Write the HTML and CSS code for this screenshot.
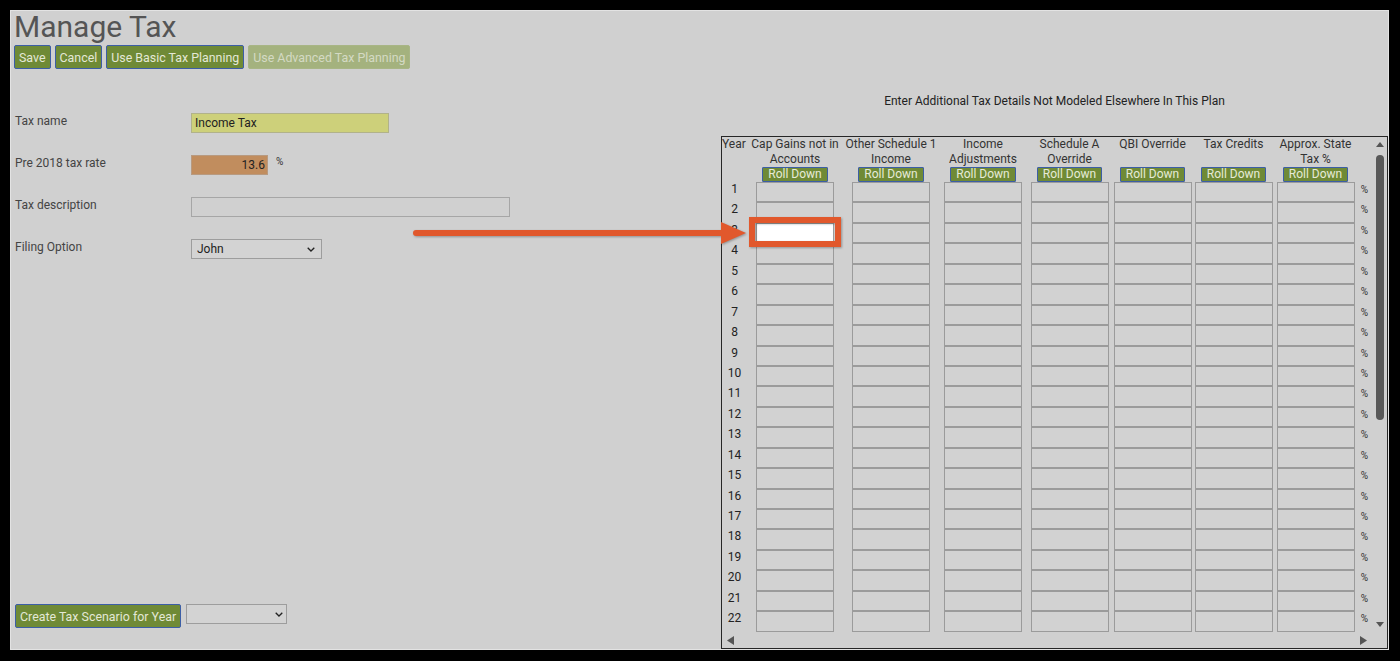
FILE: index.html
```html
<!DOCTYPE html>
<html lang="en">
<head>
    <meta charset="UTF-8">
    <meta name="viewport" content="width=device-width, initial-scale=1">
    <title>Manage Tax</title>
    <link rel="stylesheet" href="styles.css">
</head>
<body>
    <div class="page">
        <h1>Manage Tax</h1>
        <div class="toolbar">
            <button class="btn">Save</button>
            <button class="btn">Cancel</button>
            <button class="btn">Use Basic Tax Planning</button>
            <button class="btn" disabled>Use Advanced Tax Planning</button>
        </div>

        <div class="main">
            <section class="form-side">
                <div class="form">
                    <label>Tax name</label>
                    <div class="field"><input class="in-name" type="text" value="Income Tax"></div>

                    <label>Pre 2018 tax rate</label>
                    <div class="field"><input class="in-rate" type="text" value="13.6"><span class="unit">%</span></div>

                    <label>Tax description</label>
                    <div class="field"><input class="in-desc" type="text"></div>

                    <label>Filing Option</label>
                    <div class="field">
                        <div class="select-wrap sel-filing">
                            <select><option>John</option></select>
                            <svg class="chev" width="8" height="5" viewBox="0 0 8 5"><path d="M0.7 0.7 L4 4 L7.3 0.7" fill="none" stroke="#222" stroke-width="1.3"/></svg>
                        </div>
                    </div>
                </div>

                <div class="scenario">
                    <button class="btn">Create Tax Scenario for Year</button>
                    <div class="select-wrap sel-year">
                        <select><option></option></select>
                        <svg class="chev" width="8" height="5" viewBox="0 0 8 5"><path d="M0.7 0.7 L4 4 L7.3 0.7" fill="none" stroke="#222" stroke-width="1.3"/></svg>
                    </div>
                </div>
            </section>

            <section class="details">
                <h2>Enter Additional Tax Details Not Modeled Elsewhere In This Plan</h2>
                <div class="grid-frame">
                    <div class="grid-body">
                        <div class="thead">
                            <div class="th th-year"><div class="th-text">Year</div></div>
                            <div class="th"><div class="th-text">Cap Gains not in<br>Accounts</div><button class="roll">Roll Down</button></div>
                            <div class="th"><div class="th-text">Other Schedule 1<br>Income</div><button class="roll">Roll Down</button></div>
                            <div class="th"><div class="th-text">Income<br>Adjustments</div><button class="roll">Roll Down</button></div>
                            <div class="th"><div class="th-text">Schedule A<br>Override</div><button class="roll">Roll Down</button></div>
                            <div class="th"><div class="th-text">QBI Override</div><button class="roll">Roll Down</button></div>
                            <div class="th"><div class="th-text">Tax Credits</div><button class="roll">Roll Down</button></div>
                            <div class="th"><div class="th-text">Approx. State<br>Tax %</div><button class="roll">Roll Down</button></div>
                            <div class="th"></div>
                        </div>

                        <div class="row"><span class="yr">1</span><input><input><input><input><input><input><input><span class="pct">%</span></div>
                        <div class="row"><span class="yr">2</span><input><input><input><input><input><input><input><span class="pct">%</span></div>
                        <div class="row"><span class="yr">3</span><input class="active"><input><input><input><input><input><input><span class="pct">%</span></div>
                        <div class="row"><span class="yr">4</span><input><input><input><input><input><input><input><span class="pct">%</span></div>
                        <div class="row"><span class="yr">5</span><input><input><input><input><input><input><input><span class="pct">%</span></div>
                        <div class="row"><span class="yr">6</span><input><input><input><input><input><input><input><span class="pct">%</span></div>
                        <div class="row"><span class="yr">7</span><input><input><input><input><input><input><input><span class="pct">%</span></div>
                        <div class="row"><span class="yr">8</span><input><input><input><input><input><input><input><span class="pct">%</span></div>
                        <div class="row"><span class="yr">9</span><input><input><input><input><input><input><input><span class="pct">%</span></div>
                        <div class="row"><span class="yr">10</span><input><input><input><input><input><input><input><span class="pct">%</span></div>
                        <div class="row"><span class="yr">11</span><input><input><input><input><input><input><input><span class="pct">%</span></div>
                        <div class="row"><span class="yr">12</span><input><input><input><input><input><input><input><span class="pct">%</span></div>
                        <div class="row"><span class="yr">13</span><input><input><input><input><input><input><input><span class="pct">%</span></div>
                        <div class="row"><span class="yr">14</span><input><input><input><input><input><input><input><span class="pct">%</span></div>
                        <div class="row"><span class="yr">15</span><input><input><input><input><input><input><input><span class="pct">%</span></div>
                        <div class="row"><span class="yr">16</span><input><input><input><input><input><input><input><span class="pct">%</span></div>
                        <div class="row"><span class="yr">17</span><input><input><input><input><input><input><input><span class="pct">%</span></div>
                        <div class="row"><span class="yr">18</span><input><input><input><input><input><input><input><span class="pct">%</span></div>
                        <div class="row"><span class="yr">19</span><input><input><input><input><input><input><input><span class="pct">%</span></div>
                        <div class="row"><span class="yr">20</span><input><input><input><input><input><input><input><span class="pct">%</span></div>
                        <div class="row"><span class="yr">21</span><input><input><input><input><input><input><input><span class="pct">%</span></div>
                        <div class="row"><span class="yr">22</span><input><input><input><input><input><input><input><span class="pct">%</span></div>
                    </div>

                    <div class="vbar">
                        <svg width="8" height="5" viewBox="0 0 8 5"><path d="M0 5 L4 0 L8 5 Z" fill="#555"/></svg>
                        <div class="thumb"></div>
                        <svg class="down" width="8" height="5" viewBox="0 0 8 5"><path d="M0 0 L8 0 L4 5 Z" fill="#555"/></svg>
                    </div>
                    <div class="hbar">
                        <svg width="7" height="9" viewBox="0 0 7 9"><path d="M7 0 L7 9 L0 4.5 Z" fill="#555"/></svg>
                        <svg width="7" height="9" viewBox="0 0 7 9"><path d="M0 0 L7 4.5 L0 9 Z" fill="#555"/></svg>
                    </div>
                    <div class="corner"></div>
                </div>
            </section>
        </div>
    </div>

    <!-- callout drawn over the screenshot -->
    <svg class="callout" width="1400" height="661" viewBox="0 0 1400 661">
        <line x1="416" y1="233" x2="727" y2="233" stroke="#e1582c" stroke-width="6" stroke-linecap="round"/>
        <polygon points="721,222 746,233 721,244" fill="#e1582c"/>
        <rect x="752" y="220" width="86" height="24" fill="none" stroke="#e1582c" stroke-width="6"/>
    </svg>
</body>
</html>
```

FILE: styles.css
```css
* {
    box-sizing: border-box;
}

html {
    font-family: Roboto, "Liberation Sans", sans-serif;
    font-size: 12px;
}

body {
    margin: 0;
    background-color: #000;
}

.page {
    margin: 10px 11px 11px 10px;
    height: 640px;
    border: 1px solid #e3e3e3;
    background-color: #d0d0d0;
    padding-left: 3px;
    display: flex;
    flex-direction: column;
}

h1 {
    margin: 0;
    font-size: 30px;
    font-weight: 400;
    line-height: 32px;
    color: #555;
}

.toolbar {
    display: flex;
    gap: 4px;
    margin-top: 2px;
}

.btn {
    font-family: inherit;
    font-size: 12.4px;
    height: 24px;
    padding: 0 4px;
    border: 1px solid #3c5ea6;
    border-radius: 2px;
    background-color: #6f8a36;
    color: #e4e8d6;
}

.btn:disabled {
    background-color: #a4b27e;
    border-color: #a8b585;
    color: #d4dac4;
}

.main {
    flex: 1;
    display: flex;
    min-height: 0;
}

/* left side form */
.form-side {
    flex: 1;
    display: flex;
    flex-direction: column;
    padding: 44px 0 0 1px;
}

.form {
    display: grid;
    grid-template-columns: 176px auto;
    grid-auto-rows: 20px;
    row-gap: 22px;
}

.form label {
    line-height: 16px;
    color: #444;
}

.field {
    display: flex;
    align-items: flex-start;
}

.field input {
    height: 20px;
    font-family: inherit;
    font-size: 12px;
    color: #222;
    border: 1px solid #a6a6a6;
    padding: 0 3px;
    background-color: transparent;
}

.in-name {
    width: 198px;
    background-color: #cdd07a !important;
    border-color: #b1b28a !important;
}

.in-rate {
    width: 77px;
    text-align: right;
    padding-right: 2px !important;
    background-color: #c18d5e !important;
    border-color: #b89a80 !important;
}

.unit {
    margin-left: 8px;
    font-size: 10px;
    line-height: 14px;
    color: #333;
}

.in-desc {
    width: 319px;
}

.select-wrap {
    position: relative;
    height: 20px;
}

.select-wrap select {
    -webkit-appearance: none;
    appearance: none;
    width: 100%;
    height: 20px;
    border: 1px solid #9d9d9d;
    border-radius: 0;
    background-color: #d3d3d3;
    font-family: inherit;
    font-size: 12px;
    color: #222;
    padding: 0 5px;
}

.chev {
    position: absolute;
    top: 8px;
    right: 7px;
}

.sel-filing {
    width: 131px;
}

.sel-year {
    width: 101px;
}

.sel-year .chev {
    right: 4px;
}

.scenario {
    margin-top: auto;
    margin-bottom: 21px;
    display: flex;
    align-items: flex-start;
    gap: 5px;
}

/* right side grid */
.details {
    width: 667px;
    display: flex;
    flex-direction: column;
    padding-top: 25px;
}

h2 {
    margin: 0 0 27px;
    font-size: 12px;
    font-weight: 400;
    line-height: 15px;
    text-align: center;
    color: #222;
}

.grid-frame {
    flex: 1;
    border: 1px solid #262626;
    display: grid;
    grid-template-columns: 650px 15px;
    grid-template-rows: 1fr 15px;
    min-height: 0;
}

.grid-body {
    overflow: hidden;
}

.thead,
.row {
    display: grid;
    grid-template-columns: 25px 96px 96px 88px 85px 81px 81px 83px 15px;
}

.th {
    height: 45px;
    display: flex;
    flex-direction: column;
    align-items: center;
    color: #333;
}

.th-text {
    height: 30px;
    line-height: 15px;
    text-align: center;
    white-space: nowrap;
}

.th-year {
    align-items: flex-start;
}

.roll {
    height: 15px;
    padding: 0 5px;
    font-family: inherit;
    font-size: 12px;
    line-height: 13px;
    border: 1px solid #3c5ea6;
    border-radius: 1px;
    background-color: #6f8a36;
    color: #e6ead8;
}

.row {
    height: 20.45px;
    justify-items: center;
}

.row input {
    width: 78px;
    height: 100%;
    border: 1px solid #9b9b9b;
    background-color: #d2d2d2;
    padding: 0 3px;
}

.row input.active {
    background-color: #fff;
}

.yr {
    justify-self: stretch;
    text-align: center;
    line-height: 15px;
    color: #222;
}

.pct {
    font-size: 10px;
    line-height: 15px;
    color: #333;
}

.vbar {
    display: flex;
    flex-direction: column;
    align-items: center;
    padding: 5px 0 6px;
}

.thumb {
    width: 8px;
    height: 265px;
    margin-top: 8px;
    border-radius: 4px;
    background-color: #585858;
}

.vbar .down {
    margin-top: auto;
}

.hbar {
    display: flex;
    justify-content: space-between;
    align-items: center;
    padding: 0 5px;
}

/* annotation overlay */
.callout {
    position: absolute;
    left: 0;
    top: 0;
    pointer-events: none;
    filter: drop-shadow(1px 1px 1px rgba(0, 0, 0, 0.3));
}
```
